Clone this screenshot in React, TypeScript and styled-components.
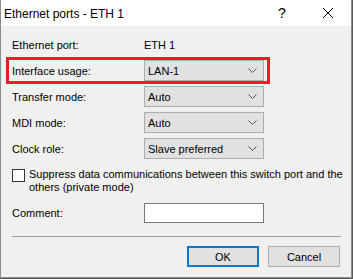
import React from "react";
import styled, { createGlobalStyle } from "styled-components";

const Global = createGlobalStyle`
  html, body { margin: 0; padding: 0; background: #5a5a5a; }
  body { font-family: "Liberation Sans", Arial, sans-serif; }
  * { box-sizing: border-box; }
`;

const Window = styled.div`
  width: 352px;
  height: 278px;
  background: #f0f0f0;
  border: 1px solid #8c8c8c;
  border-top: 0;
  display: flex;
  flex-direction: column;
  font-size: 11px;
  color: #000;
  overflow: hidden;
`;

const TitleBar = styled.div`
  height: 26px;
  flex: none;
  background: #ffffff;
  display: flex;
  align-items: center;
  padding-left: 3px;
  font-size: 12px;
`;

const TitleText = styled.div`
  flex: 1;
  padding-top: 1px;
`;

const TitleButton = styled.div<{ $w: number }>`
  width: ${(p) => p.$w}px;
  height: 26px;
  display: flex;
  align-items: center;
  justify-content: center;
  font-size: 14px;
`;

const Body = styled.div`
  flex: 1;
  padding: 8px 10px 0 11px;
  display: flex;
  flex-direction: column;
`;

const Row = styled.div<{ $mb?: number; $mt?: number; $h?: number }>`
  position: relative;
  display: grid;
  grid-template-columns: 132px 120px;
  align-items: center;
  flex: none;
  height: ${(p) => p.$h ?? 21}px;
  margin-top: ${(p) => p.$mt ?? 0}px;
  margin-bottom: ${(p) => p.$mb ?? 5}px;
`;

const Label = styled.div``;

const Value = styled.div``;

const Highlight = styled.div`
  position: absolute;
  left: -6px;
  top: -3px;
  width: 264px;
  height: 27px;
  border: 3px solid #ec1c24;
  pointer-events: none;
`;

const Combo = styled.div`
  height: 21px;
  background: #e1e1e1;
  border: 1px solid #adadad;
  display: flex;
  align-items: center;
  padding-left: 3px;
  padding-right: 6px;
`;

const ComboText = styled.div`
  flex: 1;
`;

const CheckRow = styled.div`
  display: flex;
  align-items: flex-start;
  margin-top: 9px;
  line-height: 13px;
  flex: none;
`;

const CheckText = styled.div`
  white-space: nowrap;
`;

const Box = styled.div`
  width: 13px;
  height: 13px;
  border: 1px solid #333333;
  background: #ffffff;
  margin-top: 1px;
  margin-right: 4px;
  flex: none;
`;

const Input = styled.div`
  height: 20px;
  background: #ffffff;
  border: 1px solid #7a7a7a;
`;

const Separator = styled.div`
  height: 1px;
  flex: none;
  background: #a0a0a0;
  margin-top: 13px;
`;

const Buttons = styled.div`
  display: flex;
  justify-content: flex-end;
  gap: 9px;
  margin-top: 9px;
  padding-right: 1px;
`;

const Button = styled.div<{ $primary?: boolean }>`
  width: 72px;
  height: 21px;
  background: #e1e1e1;
  border: ${(p) => (p.$primary ? "2px solid #0078d7" : "1px solid #adadad")};
  display: flex;
  align-items: center;
  justify-content: center;
`;

const Chevron = () => (
  <svg width="9" height="5" viewBox="0 0 9 5">
    <polyline points="0.5,0.5 4.5,4.5 8.5,0.5" fill="none" stroke="#505050" strokeWidth="1" />
  </svg>
);

const Select = ({ value }: { value: string }) => (
  <Combo>
    <ComboText>{value}</ComboText>
    <Chevron />
  </Combo>
);

export default function App() {
  return (
    <>
      <Global />
      <Window>
        <TitleBar>
          <TitleText>Ethernet ports - ETH 1</TitleText>
          <TitleButton $w={46}>?</TitleButton>
          <TitleButton $w={46}>
            <svg width="10" height="10" viewBox="0 0 10 10">
              <path d="M0 0 L10 10 M10 0 L0 10" stroke="#000" strokeWidth="1" />
            </svg>
          </TitleButton>
        </TitleBar>
        <Body>
          <Row>
            <Label>Ethernet port:</Label>
            <Value>ETH 1</Value>
          </Row>
          <Row>
            <Highlight />
            <Label>Interface usage:</Label>
            <Select value="LAN-1" />
          </Row>
          <Row>
            <Label>Transfer mode:</Label>
            <Select value="Auto" />
          </Row>
          <Row>
            <Label>MDI mode:</Label>
            <Select value="Auto" />
          </Row>
          <Row $mb={0}>
            <Label>Clock role:</Label>
            <Select value="Slave preferred" />
          </Row>
          <CheckRow>
            <Box />
            <CheckText>
              Suppress data communications between this switch port and the
              <br />
              others (private mode)
            </CheckText>
          </CheckRow>
          <Row $mb={0} $mt={9} $h={20}>
            <Label>Comment:</Label>
            <Input />
          </Row>
          <Separator />
          <Buttons>
            <Button $primary>OK</Button>
            <Button>Cancel</Button>
          </Buttons>
        </Body>
      </Window>
    </>
  );
}
